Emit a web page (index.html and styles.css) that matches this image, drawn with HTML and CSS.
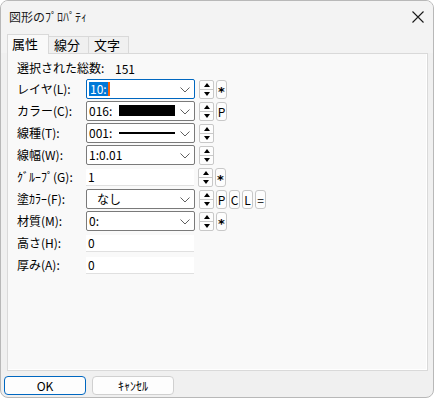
FILE: index.html
```html
<!DOCTYPE html>
<html lang="ja">
<head>
  <meta charset="UTF-8">
  <title>図形のﾌﾟﾛﾊﾟﾃｨ</title>
  <link rel="stylesheet" href="styles.css">
</head>
<body>
  <div class="window">
    <div class="titlebar">
      <span class="title">図形のﾌﾟﾛﾊﾟﾃｨ</span>
      <svg class="close" width="12" height="12" viewBox="0 0 12 12">
        <path d="M0.5 0.5 L11.5 11.5 M11.5 0.5 L0.5 11.5" stroke="#1a1a1a" stroke-width="1.1" fill="none"/>
      </svg>
    </div>

    <div class="tabs">
      <div class="tab active">属性</div>
      <div class="tab">線分</div>
      <div class="tab">文字</div>
    </div>

    <div class="panel">
      <div class="row total">
        <span class="label">選択された総数:</span>
        <span class="count">151</span>
      </div>

      <div class="row">
        <span class="label">レイヤ(L):</span>
        <div class="combo focused">
          <span class="value"><span class="sel">10:</span><span class="caret"></span></span>
          <svg class="chev" width="10" height="6" viewBox="0 0 10 6"><polyline points="0.5,0.5 5,5 9.5,0.5" fill="none" stroke="#606060" stroke-width="1"/></svg>
        </div>
        <div class="spin"><span class="up"></span><span class="down"></span></div>
        <div class="mini star">*</div>
      </div>

      <div class="row">
        <span class="label">カラー(C):</span>
        <div class="combo">
          <span class="value">016:</span>
          <span class="swatch"></span>
          <svg class="chev" width="10" height="6" viewBox="0 0 10 6"><polyline points="0.5,0.5 5,5 9.5,0.5" fill="none" stroke="#606060" stroke-width="1"/></svg>
        </div>
        <div class="spin"><span class="up"></span><span class="down"></span></div>
        <div class="mini">P</div>
      </div>

      <div class="row">
        <span class="label">線種(T):</span>
        <div class="combo">
          <span class="value">001:</span>
          <span class="linestyle"></span>
          <svg class="chev" width="10" height="6" viewBox="0 0 10 6"><polyline points="0.5,0.5 5,5 9.5,0.5" fill="none" stroke="#606060" stroke-width="1"/></svg>
        </div>
        <div class="spin"><span class="up"></span><span class="down"></span></div>
      </div>

      <div class="row">
        <span class="label">線幅(W):</span>
        <div class="combo">
          <span class="value">1:0.01</span>
          <svg class="chev" width="10" height="6" viewBox="0 0 10 6"><polyline points="0.5,0.5 5,5 9.5,0.5" fill="none" stroke="#606060" stroke-width="1"/></svg>
        </div>
        <div class="spin"><span class="up"></span><span class="down"></span></div>
      </div>

      <div class="row">
        <span class="label">ｸﾞﾙｰﾌﾟ(G):</span>
        <div class="field">1</div>
        <div class="spin"><span class="up"></span><span class="down"></span></div>
        <div class="mini star">*</div>
      </div>

      <div class="row">
        <span class="label">塗ｶﾗｰ(F):</span>
        <div class="combo">
          <span class="value indent">なし</span>
          <svg class="chev" width="10" height="6" viewBox="0 0 10 6"><polyline points="0.5,0.5 5,5 9.5,0.5" fill="none" stroke="#606060" stroke-width="1"/></svg>
        </div>
        <div class="spin"><span class="up"></span><span class="down"></span></div>
        <div class="mini">P</div>
        <div class="mini">C</div>
        <div class="mini">L</div>
        <div class="mini">=</div>
      </div>

      <div class="row">
        <span class="label">材質(M):</span>
        <div class="combo">
          <span class="value">0:</span>
          <svg class="chev" width="10" height="6" viewBox="0 0 10 6"><polyline points="0.5,0.5 5,5 9.5,0.5" fill="none" stroke="#606060" stroke-width="1"/></svg>
        </div>
        <div class="spin"><span class="up"></span><span class="down"></span></div>
        <div class="mini star">*</div>
      </div>

      <div class="row">
        <span class="label">高さ(H):</span>
        <div class="field">0</div>
      </div>

      <div class="row">
        <span class="label">厚み(A):</span>
        <div class="field">0</div>
      </div>
    </div>

    <div class="footer">
      <button class="btn default">OK</button>
      <button class="btn">ｷｬﾝｾﾙ</button>
    </div>
  </div>
</body>
</html>
```

FILE: styles.css
```css
body {
  margin: 0;
  padding: 0;
  font-family: "Noto Sans CJK JP", "Noto Sans", sans-serif;
  font-size: 12px;
  color: #000;
  background: #ffffff;
}

.window {
  width: 432px;
  height: 396px;
  border: 1px solid #b8b8b8;
  border-radius: 8px;
  background-color: #f0f0f0;
  overflow: hidden;
  display: flex;
  flex-direction: column;
}

.titlebar {
  height: 32px;
  display: flex;
  align-items: center;
  justify-content: space-between;
  padding: 0 9px 0 8px;
  background-color: #f3f3f3;
}

.title {
  font-size: 12px;
  color: #1a1a1a;
  line-height: 16px;
}

.tabs {
  display: flex;
  align-items: flex-end;
  height: 20px;
  padding-left: 6px;
  background-color: #f3f3f3;
}

.tab {
  box-sizing: border-box;
  width: 41px;
  height: 17px;
  line-height: 16px;
  font-size: 13px;
  padding-left: 5px;
  border: 1px solid #d9d9d9;
  border-bottom: none;
  margin-left: -1px;
  background-color: #f0f0f0;
}

.tab.active {
  width: 42px;
  height: 20px;
  line-height: 18px;
  padding-left: 4px;
  margin-left: 0;
  background-color: #f9f9f9;
  position: relative;
  z-index: 1;
  margin-bottom: -1px;
}

.panel {
  margin: 0 5px 0 6px;
  height: 312px;
  border: 1px solid #d9d9d9;
  box-shadow: inset -1px -1px 0 #ffffff;
  background-color: #f9f9f9;
  padding: 4px 0 0 9px;
}

.row {
  display: flex;
  align-items: center;
  height: 22px;
}

.row.total {
  height: 20px;
}

.label {
  width: 69px;
  flex: none;
  line-height: 14px;
  white-space: nowrap;
}

.count {
  margin-left: 29px;
}

.combo {
  width: 107px;
  height: 18px;
  border: 1px solid #7a7a7a;
  border-radius: 2px;
  background-color: #fff;
  display: flex;
  align-items: center;
  position: relative;
  flex: none;
}

.combo.focused {
  border-color: #0067c0;
}

.value {
  padding-left: 2px;
  line-height: 14px;
  display: flex;
  align-items: center;
}

.value.indent {
  padding-left: 10px;
}

.sel {
  background-color: #0078d7;
  color: #fff;
  padding: 0 1px;
}

.caret {
  width: 2px;
  height: 14px;
  background-color: #f7630c;
}

.swatch {
  position: absolute;
  left: 32px;
  top: 3px;
  width: 56px;
  height: 11px;
  background-color: #000;
}

.linestyle {
  position: absolute;
  left: 32px;
  top: 8px;
  width: 56px;
  height: 2px;
  background-color: #000;
}

.chev {
  position: absolute;
  right: 4px;
  top: 7px;
}

.field {
  width: 106px;
  height: 16px;
  line-height: 16px;
  padding-left: 2px;
  background-color: #fff;
  border-bottom: 1px solid #e0e0e0;
  flex: none;
}

.spin {
  width: 13px;
  height: 17px;
  margin-left: 4px;
  border: 1px solid #c8c8c8;
  border-radius: 2px;
  background-color: #fdfdfd;
  display: flex;
  flex-direction: column;
  flex: none;
}

.spin span {
  flex: 1;
  display: flex;
  align-items: center;
  justify-content: center;
}

.spin .up {
  border-bottom: 1px solid #c8c8c8;
}

.spin .up::after {
  content: "";
  border-left: 3px solid transparent;
  border-right: 3px solid transparent;
  border-bottom: 4px solid #000;
}

.spin .down::after {
  content: "";
  border-left: 3px solid transparent;
  border-right: 3px solid transparent;
  border-top: 4px solid #000;
}

.mini {
  width: 9px;
  height: 17px;
  line-height: 17px;
  margin-left: 2px;
  border: 1px solid #c8c8c8;
  border-radius: 3px;
  background-color: #fdfdfd;
  text-align: center;
  font-size: 12px;
  flex: none;
}

.mini.star {
  font-family: "DejaVu Sans", sans-serif;
  font-size: 13px;
  font-weight: bold;
  line-height: 21px;
}

.footer {
  display: flex;
  gap: 6px;
  padding: 5px 0 0 3px;
}

.btn {
  width: 82px;
  height: 19px;
  padding: 0;
  font-family: "Noto Sans CJK JP", "Noto Sans", sans-serif;
  font-size: 12px;
  line-height: 16px;
  color: #000;
  background-color: #fdfdfd;
  border: 1px solid #d0d0d0;
  border-radius: 4px;
}

.btn.default {
  border-color: #0067c0;
}
```
